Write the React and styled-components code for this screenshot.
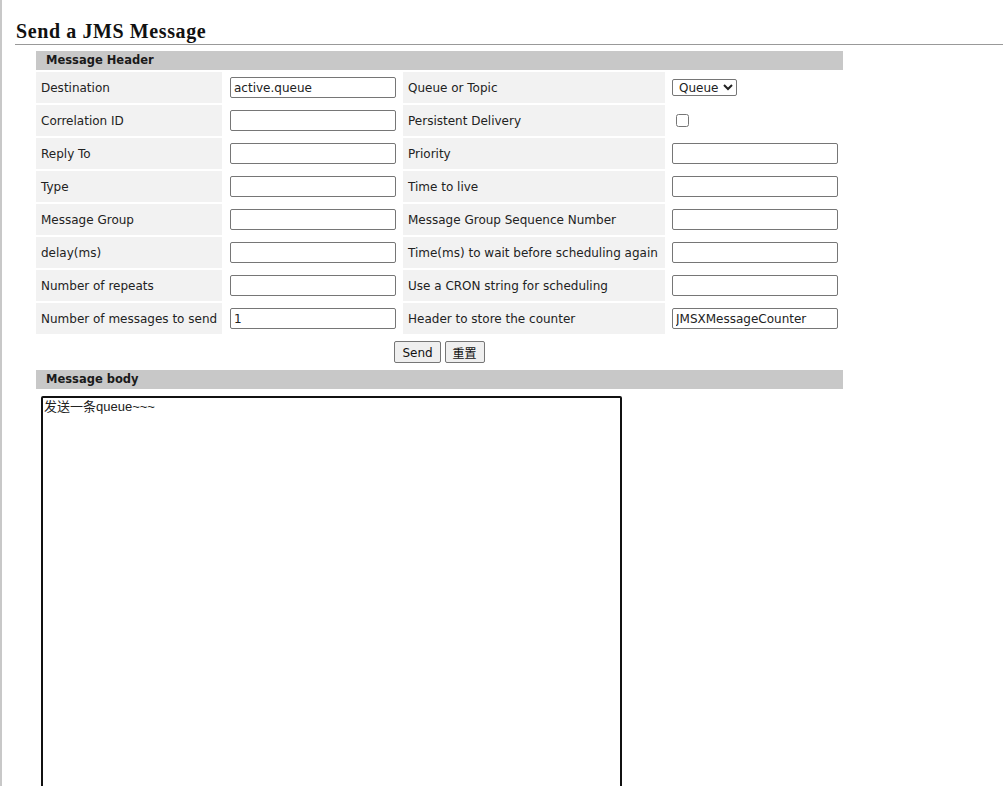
import React from "react";
import styled, { createGlobalStyle } from "styled-components";

const GlobalStyle = createGlobalStyle`
  html, body {
    margin: 0;
    padding: 0;
    overflow: hidden;
    background: #fff;
  }
  body {
    font-family: "DejaVu Sans", Verdana, sans-serif;
    font-size: 12px;
    color: #222;
  }
`;

const headerFields = [
  ["Destination", { value: "active.queue" }, "Queue or Topic", { kind: "select" }],
  ["Correlation ID", {}, "Persistent Delivery", { kind: "checkbox" }],
  ["Reply To", {}, "Priority", {}],
  ["Type", {}, "Time to live", {}],
  ["Message Group", {}, "Message Group Sequence Number", {}],
  ["delay(ms)", {}, "Time(ms) to wait before scheduling again", {}],
  ["Number of repeats", {}, "Use a CRON string for scheduling", {}],
  ["Number of messages to send", { value: "1" }, "Header to store the counter", { value: "JMSXMessageCounter" }],
];

const Field = ({ field }) => {
  if (field.kind === "select") {
    return (
      <Select defaultValue="queue">
        <option value="queue">Queue</option>
        <option value="topic">Topic</option>
      </Select>
    );
  }
  if (field.kind === "checkbox") {
    return <Checkbox type="checkbox" />;
  }
  return <TextInput type="text" defaultValue={field.value || ""} />;
};

const App = () => {
  return (
    <Page>
      <GlobalStyle />
      <Title>Send a JMS Message</Title>
      <Form>
        <HeaderTable>
          <SectionBar $span>Message Header</SectionBar>
          {headerFields.map(([label1, field1, label2, field2]) => (
            <React.Fragment key={label1}>
              <Label>{label1}</Label>
              <InputCell $pad={6}>
                <Field field={field1} />
              </InputCell>
              <Label>{label2}</Label>
              <InputCell $pad={5}>
                <Field field={field2} />
              </InputCell>
            </React.Fragment>
          ))}
        </HeaderTable>
        <ButtonRow>
          <Button type="button">Send</Button>
          <Button type="button">重置</Button>
        </ButtonRow>
        <SectionBar>Message body</SectionBar>
        <Body defaultValue="发送一条queue~~~" />
      </Form>
    </Page>
  );
};

const Page = styled.div`
  min-height: 100vh;
  border-left: 2px solid #c8c8c8;
  box-sizing: border-box;
  overflow: hidden;
`;

const Title = styled.h2`
  margin: 19px 0 0 13px;
  padding: 0 0 1px 1px;
  height: 24px;
  line-height: 24px;
  font-family: "Liberation Serif", "Times New Roman", serif;
  font-size: 20px;
  font-weight: bold;
  letter-spacing: 0.6px;
  color: #111;
  border-bottom: 1px solid #999;
`;

const Form = styled.div`
  margin: 6px 0 0 34px;
  width: 807px;
`;

const HeaderTable = styled.div`
  display: grid;
  grid-template-columns: 186px 177px 262px 176px;
  grid-template-rows: 19px repeat(8, 31px);
  gap: 2px;
`;

const SectionBar = styled.div`
  grid-column: ${(p) => (p.$span ? "1 / -1" : "auto")};
  height: 19px;
  line-height: 19px;
  padding-left: 10px;
  background: #c8c8c8;
  font-size: 11.5px;
  font-weight: bold;
  color: #1a1a1a;
`;

const Label = styled.div`
  display: flex;
  align-items: center;
  padding-left: 5px;
  background: #f2f2f2;
  white-space: nowrap;
`;

const InputCell = styled.div`
  display: flex;
  align-items: center;
  padding-left: ${(p) => p.$pad}px;
`;

const TextInput = styled.input`
  box-sizing: border-box;
  width: 166px;
  height: 21px;
  margin: 0;
  padding: 0 3px;
  border: 1px solid #767676;
  border-radius: 2px;
  font-family: "DejaVu Sans", Verdana, sans-serif;
  font-size: 12px;
  color: #222;
  background: #fff;
`;

const Select = styled.select`
  box-sizing: border-box;
  width: 65px;
  height: 17px;
  margin: 0;
  padding: 0 0 0 2px;
  border: 1px solid #767676;
  border-radius: 2px;
  font-family: "DejaVu Sans", Verdana, sans-serif;
  font-size: 12px;
  color: #222;
  background: #fff;
`;

const Checkbox = styled.input`
  width: 13px;
  height: 13px;
  margin: 0 0 0 4px;
`;

const ButtonRow = styled.div`
  display: flex;
  justify-content: center;
  gap: 4px;
  margin: 7px 0 7px;
  height: 22px;
`;

const Button = styled.button`
  box-sizing: border-box;
  height: 22px;
  padding: 1px 7px 0;
  border: 1px solid #767676;
  border-radius: 2px;
  background: #efefef;
  font-family: "DejaVu Sans", "Noto Sans CJK SC", Verdana, sans-serif;
  font-size: 12px;
  color: #111;
`;

const Body = styled.textarea`
  display: block;
  box-sizing: border-box;
  width: 581px;
  height: 420px;
  margin: 7px 0 0 5px;
  padding: 1px 1px;
  border: 2px solid #111;
  border-radius: 2px;
  outline: none;
  resize: none;
  font-family: "Liberation Sans", "Noto Sans CJK SC", Arial, sans-serif;
  font-size: 13px;
  line-height: 15px;
  color: #222;
`;

export default App;
